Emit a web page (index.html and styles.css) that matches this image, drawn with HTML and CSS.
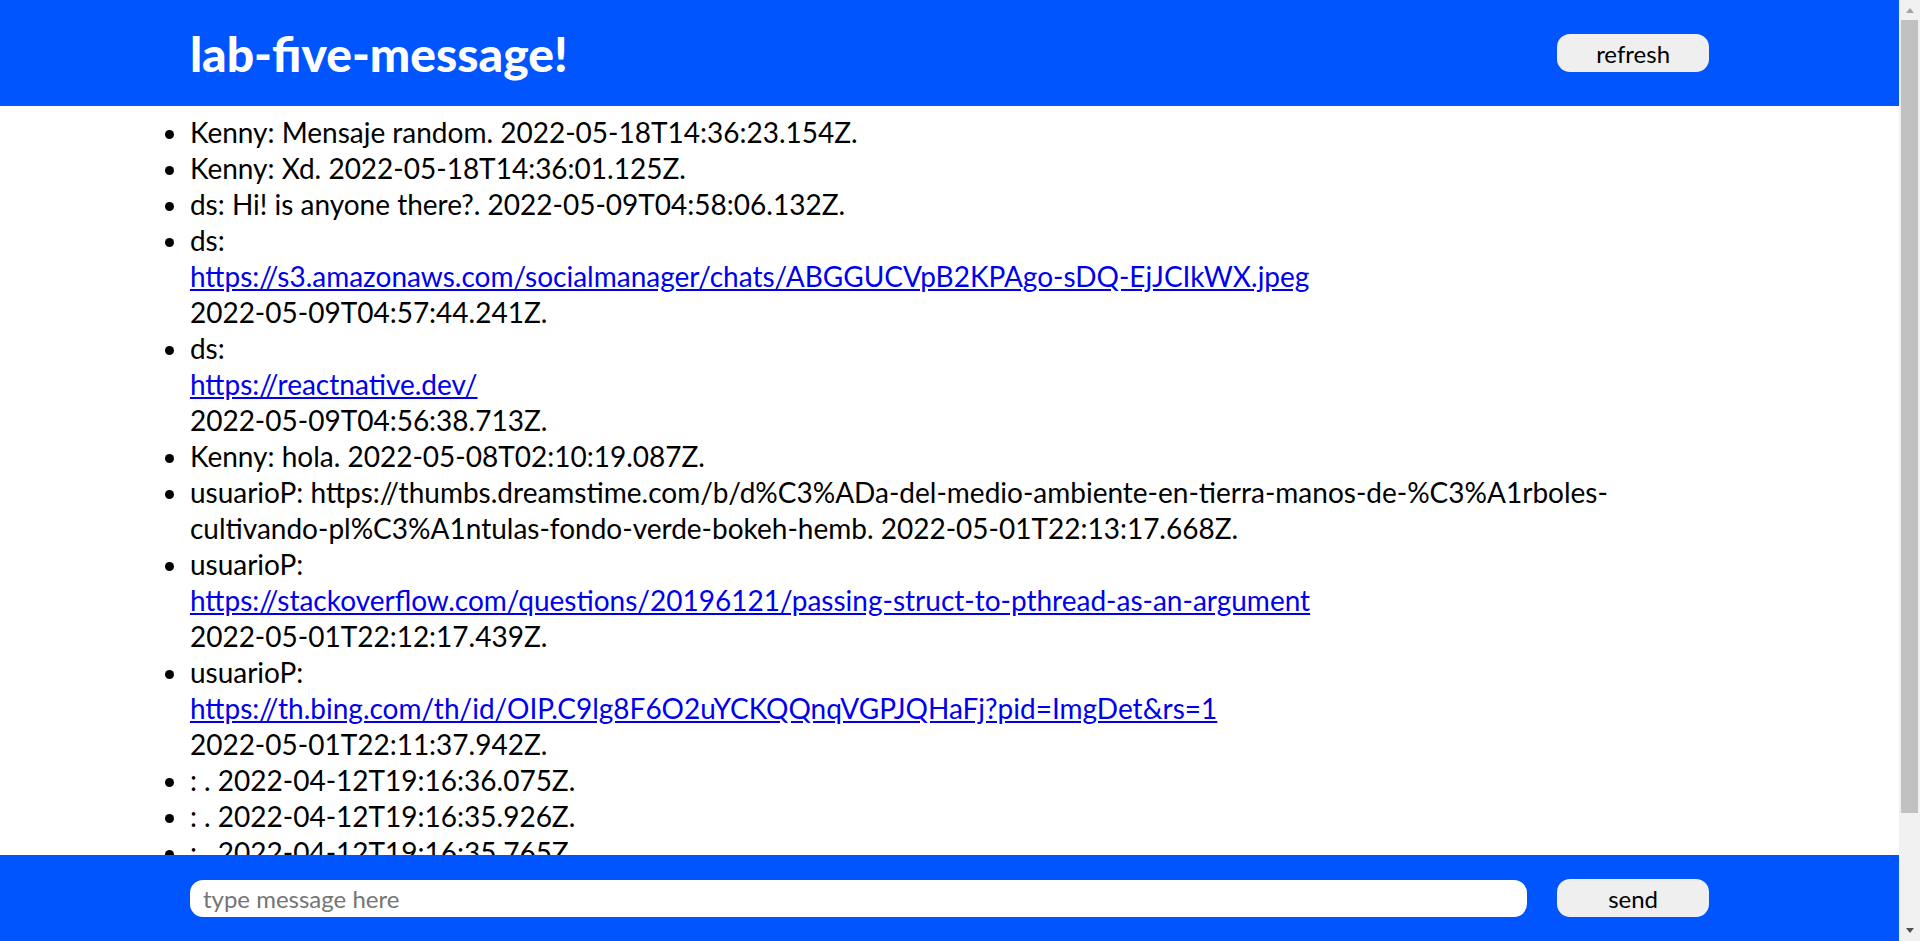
FILE: index.html
```html
<!DOCTYPE html>
<html lang="en">
<head>
<meta charset="utf-8">
<title>lab-five-message!</title>
<link rel="stylesheet" href="styles.css">
</head>
<body>
<div class="app">
  <div class="window">
    <header class="topbar">
      <div class="bar-inner">
        <h1 class="title">lab-five-message!</h1>
        <button class="btn">refresh</button>
      </div>
    </header>
    <main class="messages">
      <ul class="message-list">
        <li>Kenny: Mensaje random. 2022-05-18T14:36:23.154Z.</li>
        <li>Kenny: Xd. 2022-05-18T14:36:01.125Z.</li>
        <li>ds: Hi! is anyone there?. 2022-05-09T04:58:06.132Z.</li>
        <li>ds:<a class="link" href="#">https://s3.amazonaws.com/socialmanager/chats/ABGGUCVpB2KPAgo-sDQ-EjJCIkWX.jpeg</a>2022-05-09T04:57:44.241Z.</li>
        <li>ds:<a class="link" href="#">https://reactnative.dev/</a>2022-05-09T04:56:38.713Z.</li>
        <li>Kenny: hola. 2022-05-08T02:10:19.087Z.</li>
        <li>usuarioP: https://thumbs.dreamstime.com/b/d%C3%ADa-del-medio-ambiente-en-tierra-manos-de-%C3%A1rboles-cultivando-pl%C3%A1ntulas-fondo-verde-bokeh-hemb. 2022-05-01T22:13:17.668Z.</li>
        <li>usuarioP:<a class="link" href="#">https://stackoverflow.com/questions/20196121/passing-struct-to-pthread-as-an-argument</a>2022-05-01T22:12:17.439Z.</li>
        <li>usuarioP:<a class="link" href="#">https://th.bing.com/th/id/OIP.C9lg8F6O2uYCKQQnqVGPJQHaFj?pid=ImgDet&amp;rs=1</a>2022-05-01T22:11:37.942Z.</li>
        <li>: . 2022-04-12T19:16:36.075Z.</li>
        <li>: . 2022-04-12T19:16:35.926Z.</li>
        <li>: . 2022-04-12T19:16:35.765Z.</li>
      </ul>
    </main>
    <footer class="bottombar">
      <div class="bar-inner compose">
        <input class="input" type="text" placeholder="type message here">
        <button class="btn">send</button>
      </div>
    </footer>
  </div>
  <div class="scrollbar">
    <div class="sb-btn"><span class="arrow-up"></span></div>
    <div class="sb-thumb"></div>
    <div class="sb-track"></div>
    <div class="sb-btn sb-btn-down"><span class="arrow-down"></span></div>
  </div>
</div>
</body>
</html>
```

FILE: styles.css
```css
* { box-sizing: border-box; }
html, body {
  margin: 0;
  height: 100%;
  overflow: hidden;
  background: #fff;
  font-family: Lato, "Open Sans", sans-serif;
  color: #000;
}
.app {
  display: flex;
  height: 100vh;
}
.window {
  flex: 1;
  min-width: 0;
  display: flex;
  flex-direction: column;
}
.topbar {
  flex: none;
  height: 106px;
  background: #0055ff;
  display: flex;
  justify-content: center;
}
.bar-inner {
  width: 80%;
  display: flex;
  align-items: center;
  justify-content: space-between;
}
.title {
  margin: 0;
  color: #fff;
  font-size: 48px;
  font-weight: 900;
  letter-spacing: 0;
}
.btn {
  flex: none;
  width: 152px;
  height: 38px;
  border: none;
  border-radius: 13px;
  background: #efefef;
  color: #000;
  font-family: Lato, sans-serif;
  font-size: 24px;
  padding: 0;
}
.messages {
  flex: 1;
  min-height: 0;
  overflow: hidden;
  display: flex;
  justify-content: center;
}
.message-list {
  width: 80%;
  margin: 0;
  padding: 8px 0 0 0;
  font-size: 28px;
  line-height: 36px;
}
.link {
  display: block;
  color: #0000ee;
  text-decoration: underline;
}
.bottombar {
  flex: none;
  height: 86px;
  background: #0055ff;
  display: flex;
  justify-content: center;
}
.compose {
  gap: 30px;
}
.input {
  flex: 1;
  min-width: 0;
  height: 37px;
  border: none;
  border-radius: 13px;
  padding: 0 13px;
  background: #fff;
  font-family: Lato, sans-serif;
  font-size: 24px;
  color: #000;
  outline: none;
}
.input::placeholder {
  color: #757575;
}
.scrollbar {
  flex: none;
  width: 21px;
  height: 100vh;
  background: #f1f1f1;
  display: flex;
  flex-direction: column;
  align-items: center;
}
.sb-btn {
  flex: none;
  height: 20px;
  width: 100%;
  display: flex;
  align-items: center;
  justify-content: center;
}
.sb-btn-down {
  height: 21px;
}
.sb-thumb {
  flex: none;
  width: 17px;
  height: 793px;
  background: #c1c1c1;
}
.sb-track {
  flex: 1;
}
.arrow-up {
  width: 0;
  height: 0;
  border-left: 4.5px solid transparent;
  border-right: 4.5px solid transparent;
  border-bottom: 5px solid #a3a3a3;
}
.arrow-down {
  width: 0;
  height: 0;
  border-left: 4.5px solid transparent;
  border-right: 4.5px solid transparent;
  border-top: 5px solid #505050;
}
```
